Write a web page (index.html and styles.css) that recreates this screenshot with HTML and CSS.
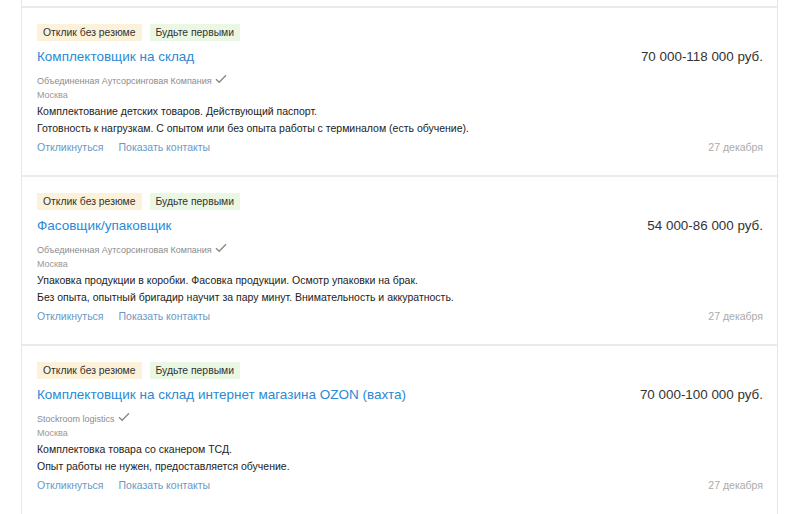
FILE: index.html
```html
<!DOCTYPE html>
<html lang="ru">
<head>
<meta charset="utf-8">
<link rel="stylesheet" href="styles.css">
</head>
<body>
<div class="list">
  <div class="card">
    <div class="tags"><span class="tag tag-yellow">Отклик без резюме</span><span class="tag tag-green">Будьте первыми</span></div>
    <div class="head"><a class="title">Комплектовщик на склад</a><span class="salary">70 000-118 000 руб.</span></div>
    <div class="company">Объединенная Аутсорсинговая Компания <svg class="check" width="12" height="10" viewBox="0 0 12 10"><path d="M1 5.2 L4.2 8.2 L11 1.2" fill="none" stroke="#8a8a8a" stroke-width="1.4"/></svg></div>
    <div class="city">Москва</div>
    <div class="desc">Комплектование детских товаров. Действующий паспорт.<br>Готовность к нагрузкам. С опытом или без опыта работы с терминалом (есть обучение).</div>
    <div class="foot"><div class="actions"><a>Откликнуться</a><a>Показать контакты</a></div><span class="date">27 декабря</span></div>
  </div>
  <div class="card">
    <div class="tags"><span class="tag tag-yellow">Отклик без резюме</span><span class="tag tag-green">Будьте первыми</span></div>
    <div class="head"><a class="title">Фасовщик/упаковщик</a><span class="salary">54 000-86 000 руб.</span></div>
    <div class="company">Объединенная Аутсорсинговая Компания <svg class="check" width="12" height="10" viewBox="0 0 12 10"><path d="M1 5.2 L4.2 8.2 L11 1.2" fill="none" stroke="#8a8a8a" stroke-width="1.4"/></svg></div>
    <div class="city">Москва</div>
    <div class="desc">Упаковка продукции в коробки. Фасовка продукции. Осмотр упаковки на брак.<br>Без опыта, опытный бригадир научит за пару минут. Внимательность и аккуратность.</div>
    <div class="foot"><div class="actions"><a>Откликнуться</a><a>Показать контакты</a></div><span class="date">27 декабря</span></div>
  </div>
  <div class="card">
    <div class="tags"><span class="tag tag-yellow">Отклик без резюме</span><span class="tag tag-green">Будьте первыми</span></div>
    <div class="head"><a class="title">Комплектовщик на склад интернет магазина OZON (вахта)</a><span class="salary">70 000-100 000 руб.</span></div>
    <div class="company">Stockroom logistics <svg class="check" width="12" height="10" viewBox="0 0 12 10"><path d="M1 5.2 L4.2 8.2 L11 1.2" fill="none" stroke="#8a8a8a" stroke-width="1.4"/></svg></div>
    <div class="city">Москва</div>
    <div class="desc">Комплектовка товара со сканером ТСД.<br>Опыт работы не нужен, предоставляется обучение.</div>
    <div class="foot"><div class="actions"><a>Откликнуться</a><a>Показать контакты</a></div><span class="date">27 декабря</span></div>
  </div>
</div>
</body>
</html>
```
FILE: styles.css
```css
html, body {
  margin: 0;
  padding: 0;
  background: #fff;
}
body {
  font-family: "Liberation Sans", Arial, sans-serif;
  color: #222;
}
.list {
  margin-left: 21px;
  width: 755px;
  border-left: 1px solid #e6e6e6;
  border-right: 1px solid #e6e6e6;
  padding-top: 6px;
  height: 508px;
}
.card {
  border-top: 2px solid #ebebeb;
  padding: 16px 14px 0 15px;
  box-sizing: border-box;
  height: 169px;
}
.tags {
  display: flex;
  gap: 8px;
  height: 17px;
}
.tag {
  font-size: 10.4px;
  line-height: 17px;
  padding: 0 6px;
  color: #333;
}
.tag-yellow { background: #fcf2da; }
.tag-green { background: #eaf7e3; }
.head {
  display: flex;
  justify-content: space-between;
  align-items: baseline;
  margin-top: 6px;
  height: 20px;
}
.title {
  font-size: 13.5px;
  line-height: 20px;
  color: #2a8ad6;
}
.salary {
  font-size: 13.4px;
  color: #333;
}
.company {
  margin-top: 7px;
  font-size: 9px;
  line-height: 14px;
  color: #8c8c8c;
  display: flex;
  align-items: center;
  gap: 3px;
}
.check { margin-top: -4px; }
.city {
  font-size: 9px;
  line-height: 15px;
  color: #999;
}
.desc {
  font-size: 10.5px;
  line-height: 17px;
  color: #222;
}
.foot {
  display: flex;
  justify-content: space-between;
  align-items: baseline;
  margin-top: 3px;
  font-size: 10.5px;
  line-height: 14px;
}
.actions {
  display: flex;
  gap: 15px;
}
.actions a { color: #6a98c6; }
.date { color: #ababab; }
```
